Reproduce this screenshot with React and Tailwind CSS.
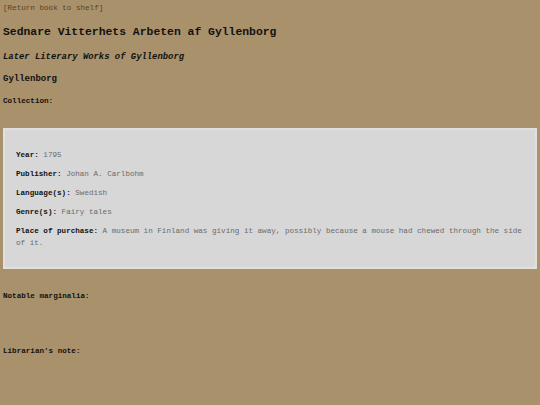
export default function App() {
  const mono = { fontFamily: '"Liberation Mono", "Courier New", monospace' };
  const rows = [
    ["Year", "1795"],
    ["Publisher", "Johan A. Carlbohm"],
    ["Language(s)", "Swedish"],
    ["Genre(s)", "Fairy tales"],
    [
      "Place of purchase",
      "A museum in Finland was giving it away, possibly because a mouse had chewed through the side of it.",
    ],
  ];

  return (
    <div
      className="min-h-[405px] w-full bg-[#a9916b] px-[3px] pt-[2px] pb-4 text-black"
      style={mono}
    >
      {/* header */}
      <a href="#" className="block text-[7.6px] leading-[12px] text-[#5b4424]">
        [Return book to shelf]
      </a>
      <h1 className="mt-[10px] text-[11.4px] font-bold leading-[16px] text-[#111]">
        Sednare Vitterhets Arbeten af Gyllenborg
      </h1>
      <h2 className="mt-[11px] text-[8.9px] font-bold italic leading-[12px] text-[#111]">
        Later Literary Works of Gyllenborg
      </h2>
      <h3 className="mt-[10px] text-[9px] font-bold leading-[12px] text-[#111]">
        Gyllenborg
      </h3>
      <p className="mt-[10px] text-[7.6px] font-bold leading-[12px] text-[#111]">
        Collection:
      </p>

      {/* details panel */}
      <div className="mt-[21px] border-2 border-[#e2e0dc] bg-[#d7d7d7] px-[11px] pt-[19px] pb-[18px]">
        <div className="flex flex-col gap-[7px]">
          {rows.map(([label, value]) => (
            <p key={label} className="text-[7.6px] leading-[12px]">
              <span className="font-bold text-[#111]">{label}:</span>{" "}
              <span className="text-[#6b6b6b]">{value}</span>
            </p>
          ))}
        </div>
      </div>

      <p className="mt-[21px] text-[7.6px] font-bold leading-[12px] text-[#111]">
        Notable marginalia:
      </p>
      <p className="mt-[43px] text-[7.6px] font-bold leading-[12px] text-[#111]">
        Librarian's note:
      </p>
    </div>
  );
}
